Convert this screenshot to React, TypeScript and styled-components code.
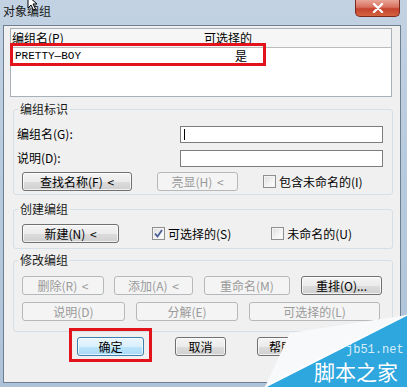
import React from "react";
import styled, { createGlobalStyle } from "styled-components";

const UI = `"Noto Sans CJK SC", "Noto Sans", sans-serif`;

const GlobalStyle = createGlobalStyle`
  html, body {
    margin: 0;
    padding: 0;
  }

  body {
    width: 407px;
    height: 387px;
    overflow: hidden;
    font-family: ${UI};
    font-size: 12px;
    color: #000;
  }
`;

const Window = styled.div`
  position: relative;
  width: 407px;
  height: 387px;
  overflow: hidden;

  display: flex;
  flex-direction: column;

  background: linear-gradient(180deg, #c2d2e3 0%, #b9cbde 40%, #aec3d9 100%);
`;

const TitleBar = styled.div`
  height: 25px;
  flex: none;
  padding-left: 3px;

  display: flex;
  align-items: flex-start;
  justify-content: space-between;
`;

const TitleText = styled.div`
  margin-top: 4px;
  line-height: 14px;
  font-size: 12px;
  color: #1a1a1a;
`;

const CloseButton = styled.div`
  width: 45px;
  height: 17px;
  margin-right: 7px;
  box-sizing: border-box;

  border: 1px solid #7d2a1e;
  border-top: none;
  border-radius: 0 0 5px 5px;
  background: linear-gradient(180deg, #e9a597 0%, #d8705e 45%, #c5422e 55%, #d4643f 100%);

  display: flex;
  align-items: center;
  justify-content: center;
`;

const Client = styled.div`
  flex: none;
  height: 358px;
  margin: 0 6px 0 3px;
  box-sizing: border-box;
  border: 1px solid #6f7f8f;
  background: #f0f0f0;

  display: flex;
  flex-direction: column;
`;

const ListBox = styled.div`
  position: relative;
  width: 382px;
  height: 69px;
  margin: 2px 0 0 6px;
  box-sizing: border-box;
  border: 1px solid #a9b0b8;
  background: #fff;

  display: flex;
  flex-direction: column;
`;

const ListHeader = styled.div`
  height: 18px;
  flex: none;
  background: #f6f6f6;
  border-bottom: 1px solid #bcbcbc;

  display: flex;
  align-items: center;
`;

const Cell = styled.div<{ $w?: number; $pad?: number; $mono?: boolean }>`
  width: ${(p) => (p.$w ? `${p.$w}px` : "auto")};
  padding-left: ${(p) => p.$pad ?? 1}px;
  box-sizing: border-box;
  flex: none;
  line-height: 14px;
  font-family: ${(p) => (p.$mono ? `"Liberation Mono", ${UI}` : UI)};
  font-size: ${(p) => (p.$mono ? 11 : 12)}px;
  white-space: nowrap;
`;

const ListRow = styled.div`
  height: 14px;
  margin-top: 1px;
  display: flex;
  align-items: center;
`;

const Highlight = styled.div<{ $left: number; $top: number; $w: number; $h: number }>`
  position: absolute;
  left: ${(p) => p.$left}px;
  top: ${(p) => p.$top}px;
  width: ${(p) => p.$w}px;
  height: ${(p) => p.$h}px;
  box-sizing: border-box;
  border: 3px solid #e3131b;
  pointer-events: none;
`;

const Group = styled.fieldset<{ $mt: number; $pb: number }>`
  width: 380px;
  margin: ${(p) => p.$mt}px 0 0 9px;
  padding: 0 9px ${(p) => p.$pb}px 3px;
  box-sizing: border-box;
  min-width: 0;
  border: 1px solid #d5dfe5;
  border-radius: 3px;
`;

const Legend = styled.legend`
  padding: 0 2px;
  margin-left: 1px;
  line-height: 14px;
  font-size: 12px;
  color: #1a1a1a;
`;

const FieldGrid = styled.div`
  margin-top: 10px;
  display: grid;
  grid-template-columns: 163px 203px;
  row-gap: 7px;
  align-items: center;
`;

const FieldLabel = styled.div`
  line-height: 14px;
  margin-top: -2px;
`;

const TextBox = styled.div`
  height: 17px;
  box-sizing: border-box;
  border: 1px solid #7d7d7d;
  background: #fff;
  padding-left: 3px;

  display: flex;
  align-items: center;
`;

const Caret = styled.span`
  width: 1px;
  height: 11px;
  background: #000;
`;

const ButtonRow = styled.div<{ $mt: number; $ml?: number }>`
  margin-top: ${(p) => p.$mt}px;
  margin-left: ${(p) => p.$ml ?? 5}px;

  display: flex;
  align-items: center;
`;

const Button = styled.div<{ $w: number; $ml?: number; $disabled?: boolean; $default?: boolean }>`
  width: ${(p) => p.$w}px;
  height: 19px;
  margin-left: ${(p) => p.$ml ?? 0}px;
  flex: none;
  box-sizing: border-box;
  border-radius: 3px;

  display: flex;
  align-items: center;
  justify-content: center;

  font-size: 12px;
  line-height: 14px;
  white-space: nowrap;
  word-spacing: 2px;

  border: 1px solid
    ${(p) => (p.$default ? "#3c7fb1" : p.$disabled ? "#b5b9bc" : "#707070")};
  color: ${(p) => (p.$disabled ? "#9a9a9a" : "#000")};
  background: ${(p) =>
    p.$default
      ? "linear-gradient(180deg, #eaf6fd 0%, #d9f0fc 50%, #bee6fd 51%, #a7d9f5 100%)"
      : p.$disabled
      ? "#f4f4f4"
      : "linear-gradient(180deg, #f4f4f4 0%, #ebebeb 50%, #dddddd 51%, #cfcfcf 100%)"};
  box-shadow: ${(p) => (p.$disabled ? "none" : "inset 0 0 0 1px rgba(255,255,255,0.7)")};
`;

const CheckItem = styled.div<{ $ml: number }>`
  margin-left: ${(p) => p.$ml}px;
  display: flex;
  align-items: center;
  gap: 3px;
  line-height: 14px;
  white-space: nowrap;
`;

const CheckBox = styled.span`
  width: 13px;
  height: 13px;
  box-sizing: border-box;
  border: 1px solid #8e8f8f;
  background: linear-gradient(135deg, #dcdcdc 0%, #f4f4f4 60%, #ffffff 100%);
  box-shadow: inset 0 0 0 1px #f4f4f4;

  display: flex;
  align-items: center;
  justify-content: center;
`;

const Overlay = styled.svg`
  position: absolute;
  right: 0;
  bottom: 0;
  pointer-events: none;
`;

const Cursor = styled.svg`
  position: absolute;
  left: 27px;
  top: -4px;
  pointer-events: none;
`;

const Check = ({ checked, label, ml }: { checked?: boolean; label: string; ml: number }) => (
  <CheckItem $ml={ml}>
    <CheckBox>
      {checked && (
        <svg width="9" height="9" viewBox="0 0 9 9">
          <path d="M1 4.5 L3.5 7.5 L8 1" fill="none" stroke="#4a5f97" strokeWidth="1.8" />
        </svg>
      )}
    </CheckBox>
    <span>{label}</span>
  </CheckItem>
);

export default function App() {
  return (
    <>
      <GlobalStyle />
      <Window>
        <TitleBar>
          <TitleText>对象编组</TitleText>
          <CloseButton>
            <svg width="12" height="10" viewBox="0 0 12 10">
              <path d="M2 1 L10 9 M10 1 L2 9" stroke="#fff" strokeWidth="2.4" strokeLinecap="round" />
            </svg>
          </CloseButton>
        </TitleBar>

        <Client>
          <ListBox>
            <ListHeader>
              <Cell $w={192}>编组名(P)</Cell>
              <Cell>可选择的</Cell>
            </ListHeader>
            <ListRow>
              <Cell $w={224} $pad={4} $mono>
                PRETTY—BOY
              </Cell>
              <Cell $pad={0}>是</Cell>
            </ListRow>
            <Highlight $left={-1} $top={14} $w={256} $h={23} />
          </ListBox>

          <Group $mt={5} $pb={3}>
            <Legend>编组标识</Legend>
            <FieldGrid>
              <FieldLabel>编组名(G):</FieldLabel>
              <TextBox>
                <Caret />
              </TextBox>
              <FieldLabel>说明(D):</FieldLabel>
              <TextBox />
            </FieldGrid>
            <ButtonRow $mt={5}>
              <Button $w={110}>查找名称(F) &lt;</Button>
              <Button $w={81} $ml={25} $disabled>
                亮显(H) &lt;
              </Button>
              <Check label="包含未命名的(I)" ml={25} />
            </ButtonRow>
          </Group>

          <Group $mt={7} $pb={5}>
            <Legend>创建编组</Legend>
            <ButtonRow $mt={8}>
              <Button $w={97}>新建(N) &lt;</Button>
              <Check checked label="可选择的(S)" ml={33} />
              <Check label="未命名的(U)" ml={40} />
            </ButtonRow>
          </Group>

          <Group $mt={4} $pb={10}>
            <Legend>修改编组</Legend>
            <ButtonRow $mt={9}>
              <Button $w={82} $disabled>
                删除(R) &lt;
              </Button>
              <Button $w={79} $ml={10} $disabled>
                添加(A) &lt;
              </Button>
              <Button $w={86} $ml={11} $disabled>
                重命名(M)
              </Button>
              <Button $w={81} $ml={11}>
                重排(O)...
              </Button>
            </ButtonRow>
            <ButtonRow $mt={7}>
              <Button $w={103} $disabled>
                说明(D)
              </Button>
              <Button $w={102} $ml={11} $disabled>
                分解(E)
              </Button>
              <Button $w={131} $ml={11} $disabled>
                可选择的(L)
              </Button>
            </ButtonRow>
          </Group>

          <ButtonRow $mt={5} $ml={73}>
            <Button $w={67} $default>
              确定
            </Button>
            <Button $w={51} $ml={31}>
              取消
            </Button>
            <Button $w={48} $ml={31}>
              帮助
            </Button>
          </ButtonRow>
        </Client>

        <Highlight $left={69} $top={328} $w={83} $h={34} />

        <Cursor width="12" height="16" viewBox="0 0 12 16">
          <path d="M1 0 L1 12 L4 9 L6.5 14 L8.5 13 L6 8 L10 8 Z" fill="#fff" stroke="#000" strokeWidth="1" />
        </Cursor>

        <Overlay width="145" height="75" viewBox="0 0 145 75">
          <polygon points="3,75 28,21 145,3" fill="#f7f9fb" />
          <polygon points="3,75 145,3 145,75" fill="#2ea6de" />
          <line x1="3" y1="75" x2="145" y2="3" stroke="#ffffff" strokeWidth="1.5" />
          <text x="84" y="41" fontFamily='"Liberation Mono", monospace' fontSize="12" fill="#d6eef9">
            jb51.net
          </text>
          <text x="52" y="68" fontFamily={UI} fontSize="21" fill="#ffffff">
            脚本之家
          </text>
        </Overlay>
      </Window>
    </>
  );
}
